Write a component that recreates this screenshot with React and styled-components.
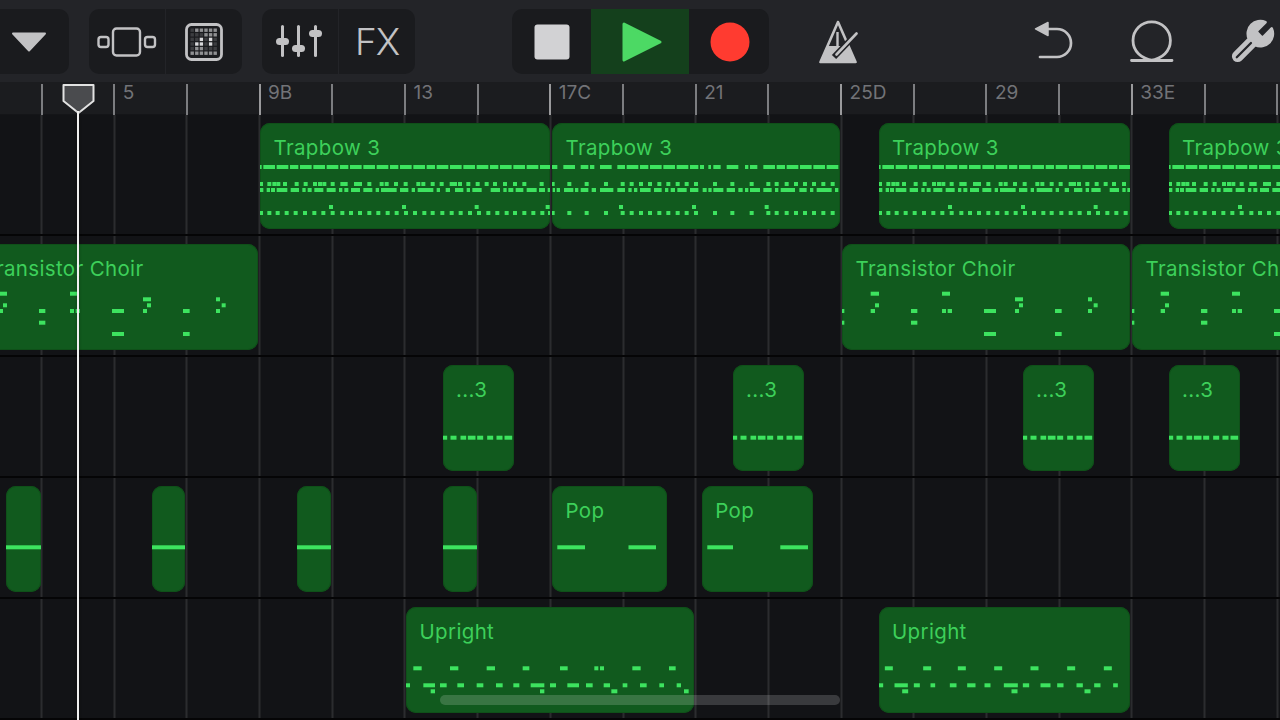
import React from 'react';
import styled, { createGlobalStyle } from 'styled-components';

const Global = createGlobalStyle`
  html, body { margin: 0; padding: 0; background: #121316; }
  body { width: 1280px; height: 720px; overflow: hidden; font-family: Inter, "Liberation Sans", sans-serif; }
`;

const Screen = styled.div`
  position: relative; width: 1280px; height: 720px; overflow: hidden;
  display: flex; flex-direction: column; background: #121316;
`;
const Toolbar = styled.header`
  height: 82px; flex: none; display: flex; align-items: flex-start; padding-top: 9px;
  box-sizing: border-box; background: #232428;
`;
const Group = styled.div`
  display: flex; height: 65px; border-radius: 10px; overflow: hidden; background: #1a1b1e;
  margin-left: ${p => p.$ml || 0}px; flex: none;
`;
const Seg = styled.div`
  width: ${p => p.$w}px; height: 100%; display: flex; align-items: center; justify-content: center;
  flex: none; background: ${p => p.$active ? '#14401c' : 'transparent'};
  border-left: ${p => p.$div ? '1px solid #232428' : 'none'}; box-sizing: border-box;
  padding-left: ${p => p.$pl || 0}px;
`;
const FxLabel = styled.span`
  font: 350 37px/1 Inter, sans-serif; color: #c2c2c4; letter-spacing: -1px;
`;
const ToolIcon = styled.div`
  height: 65px; width: ${p => p.$w}px; margin-left: ${p => p.$ml}px; flex: none;
  display: flex; align-items: center; justify-content: center;
`;
const Ruler = styled.div`
  height: 33px; flex: none; display: flex; background: #1b1c1f; padding-left: 40.5px; overflow: hidden;
  box-shadow: inset 0 -1px 0 #141518;
`;
const Bar = styled.div`
  width: 72.7px; flex: none; box-sizing: border-box; margin-top: 2px;
  border-left: 2px solid ${p => p.$major ? '#9a9a9c' : '#7c7d80'};
  padding-left: 7.5px; font-size: 19px; line-height: 18px; color: #727377;
  white-space: nowrap;
`;
const Lanes = styled.main`
  flex: 1; display: flex; flex-direction: column; min-height: 0;
  background-color: #121316;
  background-image: repeating-linear-gradient(90deg, #2b2c2f 0, #2b2c2f 2px, transparent 2px, transparent 72.7px);
  background-position: 40.5px 0;
`;
const Lane = styled.section`
  position: relative; height: 121px; flex: none; box-sizing: border-box; border-bottom: 2px solid #050506;
`;
const Region = styled.div`
  position: absolute; top: 8px; height: 106px;
  left: ${p => p.$x}px; width: ${p => p.$w}px;
  display: grid; overflow: hidden; border-radius: 10px;
  background: #115a1e; box-shadow: inset 0 0 0 1px #0f5019;
  & > * { grid-area: 1 / 1; }
`;
const RegionName = styled.span`
  font-size: 20.5px; line-height: 24px; color: #3dd05a; padding: 12.5px 0 0 13.5px; white-space: nowrap;
  letter-spacing: 0.35px;
`;
const Notes = styled.svg`
  display: block; width: 100%; height: 106px; fill: #3de35f;
`;
const Scrollbar = styled.div`
  position: absolute; left: 440px; top: 695px; width: 400px; height: 10px; border-radius: 5px;
  background: rgba(255, 255, 255, 0.17);
`;
const Playhead = styled.div`
  position: absolute; left: 62px; top: 83px; width: 33px; bottom: 0; pointer-events: none;
`;
const PlayLine = styled.div`
  position: absolute; left: 14.8px; top: 28px; bottom: 0; width: 2.5px; background: #f0f0f0;
  box-shadow: 0 0 3px rgba(0, 0, 0, 0.35);
`;

/* note helpers: coordinates read off 3x crops */
const Z = (off, rows) => rows.flatMap(([y, h, segs]) =>
  segs.map(s => {
    const [a, b] = Array.isArray(s) ? s : [s - 6, s + 6];
    return [a / 3 - off, y - h / 2, (b - a) / 3, h];
  }));

const trapA = Z(5, [
  [44, 4, [[15,20],[25,60],[65,100],[105,130],[135,170],[175,210],[215,250],[255,280],[285,320],[325,360],[365,400],[405,430],[435,470],[475,510],[515,540],[545,580],[585,620],[625,660],[665,700],[705,730],[735,770],[775,810],[815,850],[855,885]]],
  [61, 4, [18,43,58,70,90,125,152,180,195,208,233,262,272,303,315,343,380,395,423,452,490,505,533,560,590,600,615,640,668,695,720,750,780,808,860]],
  [67, 4, [[15,25],[35,45],[48,60],[65,97],[107,132],[142,152],[158,170],[178,205],[215,242],[252,262],[268,280],[288,315],[325,352],[362,372],[378,425],[435,460],[470,480],[488,535],[545,555],[572,585],[600,625],[635,645],[652,680],[707,735],[745,755],[760,775],[782,805],[815,845],[852,870],[878,890]]],
  [90, 4, [18,43,68,95,122,150,178,205,233,262,288,315,343,370,398,425,453,480,508,533,562,590,617,645,672,700,727,755,780,808,835,862,885]],
  [84, 4, [228,447,665,878]],
]);
const trapB = Z(2, [
  [44, 4, [[5,22],[40,75],[92,115],[120,133],[150,185],[202,225],[230,265],[270,295],[300,335],[340,375],[380,415],[420,445],[450,462],[475,483],[490,512],[530,565],[585,595],[600,622],[640,675],[680,705],[710,745],[750,785],[790,825],[830,865]]],
  [61, 4, [8,58,110,168,218,245,273,300,328,355,383,410,438,495,547,605,655,680,710,738,765,792,820,848]],
  [67, 4, [[8,15],[20,30],[42,70],[75,85],[92,115],[125,138],[150,190],[202,225],[235,245],[252,262],[270,302],[312,335],[345,355],[362,375],[382,410],[420,445],[458,470],[475,485],[490,520],[530,555],[565,578],[585,595],[600,630],[640,665],[675,685],[692,735],[748,770],[780,790],[800,845],[855,865]]],
  [90, 4, [8,58,110,168,218,245,273,300,328,355,383,410,438,495,547,605,655,680,710,738,765,792,820,848]],
  [84, 4, [213,432,650]],
]);
const choir = Z(2, [
  [49.7, 4, [[92,117],[306,330]]],
  [55.3, 4, [[525,549],[744,756]]],
  [61.3, 4, [[105,117],[537,549],[761,773]]],
  [67, 4, [[5,13],[92,105],[213,232],[306,318],[323,336],[432,468],[525,537],[645,665],[744,756],[875,885]]],
  [78.7, 4, [[5,13],[213,232],[875,885]]],
  [90, 4, [[432,468],[645,665]]],
]);
const uprightA = Z(6, [
  [61.3, 4, [[40,65],[150,175],[260,285],[368,388],[480,503],[583,595],[600,612],[697,722],[807,827]]],
  [78.3, 4, [[17,30],[70,105],[120,140],[172,192],[230,250],[288,308],[340,358],[392,433],[450,468],[502,537],[558,578],[611,630],[668,682],[720,740],[778,792],[830,843]]],
  [84.3, 4, [[92,105],[420,433],[634,652],[852,866]]],
]);
const uprightB = Z(8.5, [
  [61.3, 4, [[43,67],[158,182],[262,286],[371,395],[480,504],[590,614],[700,724]]],
  [78.3, 4, [[25,38],[72,112],[130,148],[180,194],[238,258],[290,315],[342,360],[400,442],[457,476],[510,540],[560,579],[618,637],[671,690],[728,742]]],
  [84.3, 4, [[95,113],[423,441],[642,660]]],
]);
const dashes = Z(12.5, [[72.7, 4, [[37,50],[60,78],[90,107],[112,135],[140,158],[170,188],[198,216],[222,245]]]]);
const full = w => [[0, 59.3, w, 4]];
const pop = (a, wa, b, wb) => [[a, 59.3, wa, 4], [b, 59.3, wb, 4]];

const lanes = [
  [
    { x: 260, w: 290, name: 'Trapbow 3', notes: trapA },
    { x: 552, w: 288, name: 'Trapbow 3', notes: trapB },
    { x: 878.5, w: 251.5, name: 'Trapbow 3', notes: trapA },
    { x: 1168.5, w: 200, name: 'Trapbow 3', notes: trapA },
  ],
  [
    { x: -30, w: 288, name: 'Transistor Choir', notes: choir },
    { x: 842, w: 288, name: 'Transistor Choir', notes: choir },
    { x: 1132, w: 288, name: 'Transistor Choir', notes: choir },
  ],
  [442.5, 732.5, 1022.5, 1168.5].map(x => ({ x, w: 71, name: '...3', notes: dashes })),
  [
    { x: 6, w: 35, notes: full(35) },
    { x: 152, w: 33, notes: full(33) },
    { x: 296.5, w: 34.5, notes: full(34.5) },
    { x: 442.5, w: 34.5, notes: full(34.5) },
    { x: 552, w: 115.3, name: 'Pop', notes: pop(5.3, 27.7, 76.5, 27.5) },
    { x: 701.7, w: 111.6, name: 'Pop', notes: pop(5.3, 25.7, 78.3, 27.7) },
  ],
  [
    { x: 406, w: 288, name: 'Upright', notes: uprightA },
    { x: 878.5, w: 251.5, name: 'Upright', notes: uprightB },
  ],
];

const bars = ['', '5', '', '9B', '', '13', '', '17C', '', '21', '', '25D', '', '29', '', '33E', '', ''];

const C = '#c2c2c4';
const Chevron = () => (
  <svg width="36" height="20" viewBox="0 0 36 20"><path d="M2 1.500h32L18 18.500z" fill={C} stroke={C} strokeWidth="2" strokeLinejoin="round" /></svg>
);
const TracksIcon = () => (
  <svg width="60" height="30" viewBox="0 0 60 30" fill="none" stroke={C} strokeWidth="2.4">
    <rect x="1.500" y="10" width="10" height="10" rx="2.500" />
    <rect x="16" y="1.500" width="27" height="27" rx="3.500" />
    <rect x="48" y="10" width="10" height="10" rx="2.500" />
  </svg>
);
const GridIcon = () => {
  const lit = new Set(['0,1','0,2','0,3','0,4','0,5','1,3','1,4','1,5','2,2','2,4','3,1','3,2','3,4','4,1','4,2','5,0','5,1','5,2','5,3','5,4','5,5']);
  const cells = [];
  for (let r = 0; r < 6; r++) for (let c = 0; c < 6; c++) {
    const on = lit.has(r + ',' + c);
    const bright = on && (r === 2 || r === 3);
    cells.push(<rect key={r + '-' + c} x={6.5 + c * 4.6} y={6.5 + r * 4.6} width="3.4" height="3.4" fill={bright ? '#d8d8da' : on ? '#8f9092' : '#3c3d40'} />);
  }
  return (
    <svg width="40" height="40" viewBox="0 0 40 40">
      <rect x="2.500" y="2.500" width="35" height="35" rx="5" fill="none" stroke={C} strokeWidth="2.800" />
      {cells}
    </svg>
  );
};
const MixerIcon = () => (
  <svg width="48" height="34" viewBox="0 0 48 34" fill={C}>
    <rect x="5" y="0" width="3" height="32" rx="1.500" />
    <rect x="21" y="0" width="3" height="32" rx="1.500" />
    <rect x="38" y="0" width="3" height="32" rx="1.500" />
    <rect x="0" y="13" width="13" height="7" rx="3.500" />
    <rect x="16" y="20" width="13" height="7" rx="3.500" />
    <rect x="33" y="5" width="13" height="7" rx="3.500" />
  </svg>
);
const Metronome = () => (
  <svg width="40" height="44" viewBox="0 0 40 44">
    <path d="M20 2 2.500 42h35z" fill="none" stroke={C} strokeWidth="2.600" strokeLinejoin="round" />
    <path d="M1.500 43 9 26h22l7.500 17z" fill={C} />
    <path d="M19.500 12v15" stroke={C} strokeWidth="2.400" />
    <path d="M39 13 16 37" stroke="#232428" strokeWidth="6" />
    <path d="M38.500 13.500 18.500 34.500" stroke={C} strokeWidth="2.600" strokeLinecap="round" />
  </svg>
);
const Undo = () => (
  <svg width="40" height="42" viewBox="0 0 40 42" fill="none">
    <path d="M15 1.500v13L2.500 7.800z" fill={C} stroke={C} strokeWidth="1.500" strokeLinejoin="round" />
    <path d="M15 8h9a14 14 0 0 1 0 28H7" stroke={C} strokeWidth="2.700" strokeLinecap="round" />
  </svg>
);
const Loop = () => (
  <svg width="44" height="44" viewBox="0 0 44 44" fill="none" stroke={C} strokeWidth="2.800" strokeLinecap="round">
    <path d="M1.500 40.500H23C11 38.500 3 31 3 20.500a18.700 18.700 0 0 1 37.400 0C40.400 31 32.500 38.500 20.500 40.500H42" />
  </svg>
);
const Wrench = () => (
  <svg width="50" height="50" viewBox="0 0 24 24" fill="none">
    <path d="M14.700 6.300a1 1 0 0 0 0 1.400l1.600 1.600a1 1 0 0 0 1.400 0l3.770-3.770a6 6 0 0 1-7.940 7.940l-6.910 6.910a2.120 2.120 0 0 1-3-3l6.910-6.910a6 6 0 0 1 7.940-7.940l-3.760 3.760z" fill={C} stroke={C} strokeWidth="1.300" strokeLinejoin="round" />
    <path d="M4.700 19.300 11.500 12.500" stroke="#232428" strokeWidth="1.100" strokeLinecap="round" />
  </svg>
);
const StopShape = () => (
  <svg width="36" height="36" viewBox="0 0 36 36"><rect x="0.500" y="0.500" width="35" height="35" rx="3" fill="#d2d2d4" /></svg>
);
const PlayShape = () => (
  <svg width="42" height="42" viewBox="0 0 42 42"><path d="M3 3 39 21 3 39z" fill="#4cd964" stroke="#4cd964" strokeWidth="3" strokeLinejoin="round" /></svg>
);
const RecShape = () => (
  <svg width="40" height="40" viewBox="0 0 40 40"><circle cx="20" cy="20" r="19.500" fill="#ff3b30" /></svg>
);

export default function App() {
  return (
    <Screen>
      <Global />
      <Toolbar>
        <Group $ml={-20}>
          <Seg $w={89} $pl={8}><Chevron /></Seg>
        </Group>
        <Group $ml={20}>
          <Seg $w={76}><TracksIcon /></Seg>
          <Seg $w={77} $div><GridIcon /></Seg>
        </Group>
        <Group $ml={20}>
          <Seg $w={76}><MixerIcon /></Seg>
          <Seg $w={77} $div><FxLabel>FX</FxLabel></Seg>
        </Group>
        <Group $ml={97}>
          <Seg $w={79}><StopShape /></Seg>
          <Seg $w={98} $active $pl={3}><PlayShape /></Seg>
          <Seg $w={80} $pl={2}><RecShape /></Seg>
        </Group>
        <ToolIcon $w={60} $ml={39}><Metronome /></ToolIcon>
        <ToolIcon $w={60} $ml={155}><Undo /></ToolIcon>
        <ToolIcon $w={60} $ml={38.5}><Loop /></ToolIcon>
        <ToolIcon $w={60} $ml={40}><Wrench /></ToolIcon>
      </Toolbar>
      <Ruler>
        {bars.map((b, i) => <Bar key={i} $major={b && /[A-Z]/.test(b)}>{b}</Bar>)}
      </Ruler>
      <Lanes>
        {lanes.map((regions, i) => (
          <Lane key={i}>
            {regions.map((r, j) => (
              <Region key={j} $x={r.x} $w={r.w}>
                {r.name ? <RegionName>{r.name}</RegionName> : null}
                <Notes viewBox={`0 0 ${r.w} 106`}>
                  {r.notes.map((n, k) => <rect key={k} x={n[0]} y={n[1]} width={n[2]} height={n[3]} />)}
                </Notes>
              </Region>
            ))}
          </Lane>
        ))}
      </Lanes>
      <Scrollbar />
      <Playhead>
        <svg width="33" height="32" viewBox="0 0 33 32">
          <path d="M1.500 2h30v16L16.500 30 1.500 18z" fill="#4a4b4e" stroke="#e2e2e2" strokeWidth="2" strokeLinejoin="round" />
        </svg>
        <PlayLine />
      </Playhead>
    </Screen>
  );
}
